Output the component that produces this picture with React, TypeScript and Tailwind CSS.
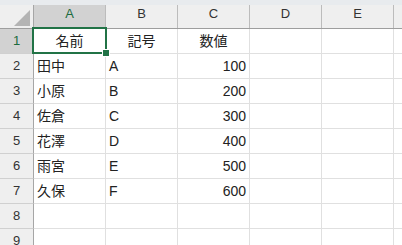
import React from "react";

const cols = ["A", "B", "C", "D", "E", ""];
type Cell = { v: string; align: "left" | "center" | "right" };
const data: Cell[][] = [
  [
    { v: "名前", align: "center" },
    { v: "記号", align: "center" },
    { v: "数値", align: "center" },
  ],
  [
    { v: "田中", align: "left" },
    { v: "A", align: "left" },
    { v: "100", align: "right" },
  ],
  [
    { v: "小原", align: "left" },
    { v: "B", align: "left" },
    { v: "200", align: "right" },
  ],
  [
    { v: "佐倉", align: "left" },
    { v: "C", align: "left" },
    { v: "300", align: "right" },
  ],
  [
    { v: "花澤", align: "left" },
    { v: "D", align: "left" },
    { v: "400", align: "right" },
  ],
  [
    { v: "雨宮", align: "left" },
    { v: "E", align: "left" },
    { v: "500", align: "right" },
  ],
  [
    { v: "久保", align: "left" },
    { v: "F", align: "left" },
    { v: "600", align: "right" },
  ],
  [],
  [],
];

export default function App() {
  return (
    <div
      className="w-[402px] h-[245px] overflow-hidden bg-white flex flex-col"
      style={{ fontFamily: '"Liberation Sans", "Noto Sans CJK JP", sans-serif' }}
    >
      <div className="h-[5px] shrink-0 bg-[#e8ebee]" />
      {/* column headers */}
      <div className="h-[24px] shrink-0 flex border-b border-[#9e9e9e] bg-[#efefef]">
        <div className="w-[34px] shrink-0 border-r border-[#a6a6a6] flex items-end justify-end pr-[3px] pb-[2px]">
          <svg width="16" height="16" viewBox="0 0 16 16">
            <polygon points="0,16 16,16 16,0" fill="#b4b4b4" />
          </svg>
        </div>
        {cols.map((c, i) => (
          <div
            key={i}
            className={`w-[72px] shrink-0 border-r border-[#bcbcbc] flex items-center justify-center pb-[5px] text-[13px] ${
              i === 0 ? "bg-[#d2d2d2] text-[#1b6b3e]" : "text-[#333]"
            }`}
          >
            {c}
          </div>
        ))}
      </div>
      {/* rows */}
      {data.map((row, r) => (
        <div key={r} className="h-[25px] shrink-0 flex">
          <div
            className={`w-[34px] shrink-0 border-r border-b border-r-[#a6a6a6] border-b-[#d0d0d0] flex items-center justify-center text-[13px] ${
              r === 0 ? "bg-[#d2d2d2] text-[#1b6b3e]" : "bg-[#efefef] text-[#333]"
            }`}
          >
            {r + 1}
          </div>
          {cols.map((c, ci) => {
            const cell = row[ci];
            return (
              <div
                key={ci}
                className={`relative w-[72px] shrink-0 border-r border-b border-[#e0e0e0] flex items-center px-[3px] text-[14px] text-[#222] ${
                  cell?.align === "center"
                    ? "justify-center"
                    : cell?.align === "right"
                    ? "justify-end"
                    : "justify-start"
                } ${r === 0 && ci === 0 ? "z-10" : ""}`}
              >
                {cell?.v}
                {r === 0 && ci === 0 && (
                  <div className="absolute left-[-2px] top-[-2px] w-[75px] h-[27px] border-2 border-[#217346]">
                    <div className="absolute right-[-5px] bottom-[-5px] w-[8px] h-[8px] bg-[#217346] border border-white" />
                  </div>
                )}
              </div>
            );
          })}
        </div>
      ))}
    </div>
  );
}
